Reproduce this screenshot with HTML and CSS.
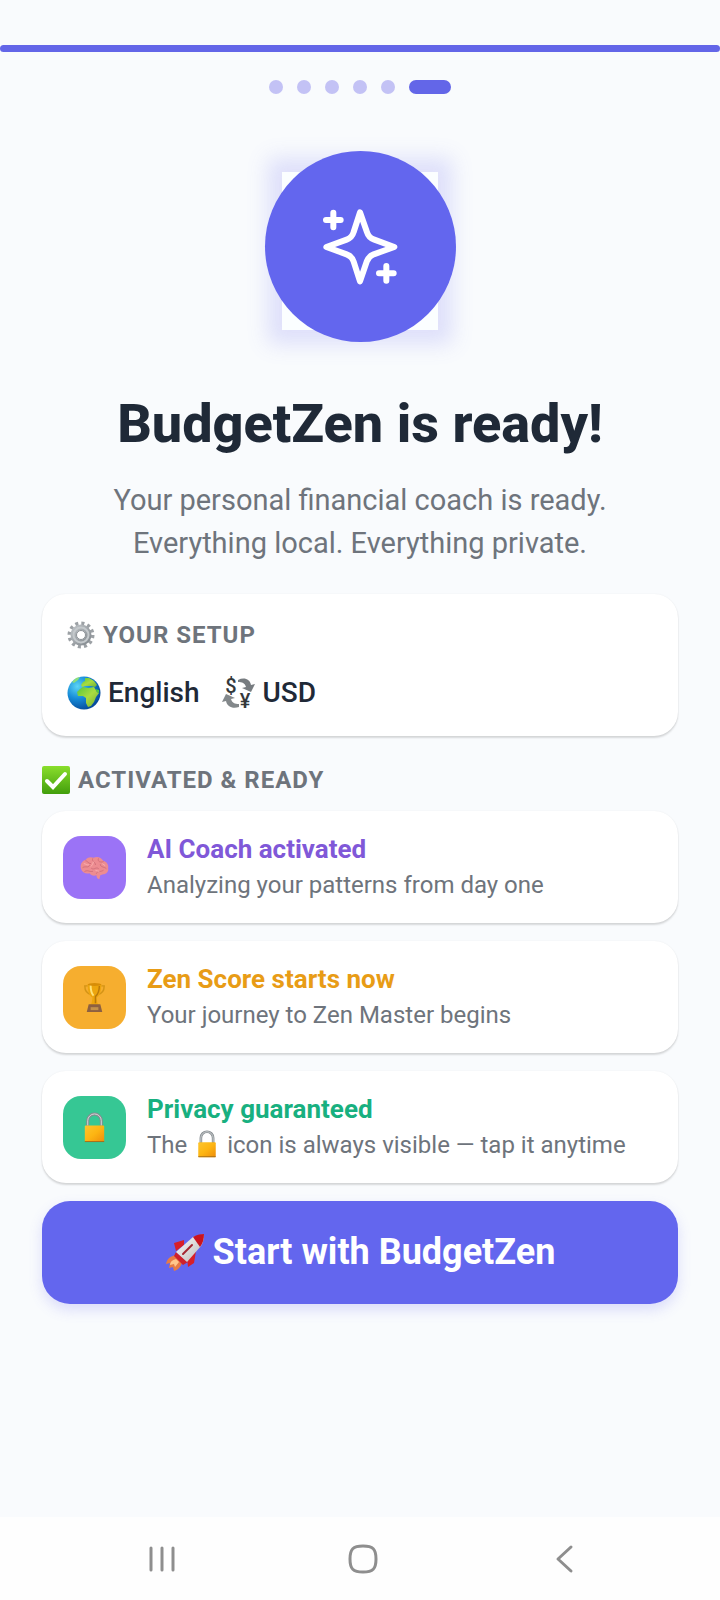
FILE: index.html
```html
<!DOCTYPE html>
<html lang="en">
<head>
<meta charset="utf-8">
<meta name="viewport" content="width=device-width, initial-scale=1">
<title>BudgetZen</title>
<link rel="stylesheet" href="styles.css">
</head>
<body>
<svg class="defs" aria-hidden="true">
  <defs>
    <linearGradient id="gold" x1="0" x2="1" y1="0" y2="1"><stop offset="0" stop-color="#fdc52e"/><stop offset=".5" stop-color="#fdb512"/><stop offset="1" stop-color="#ee8c0b"/></linearGradient>
    <linearGradient id="green" x1="0" x2="0" y1="0" y2="1"><stop offset="0" stop-color="#8ade2c"/><stop offset="1" stop-color="#429e0c"/></linearGradient>
    <radialGradient id="sea" cx=".3" cy=".3" r=".75"><stop offset="0" stop-color="#5cd5f5"/><stop offset=".5" stop-color="#168bd8"/><stop offset="1" stop-color="#064b9b"/></radialGradient>
    <linearGradient id="land" x1="0" x2="1" y1="0" y2="1"><stop offset="0" stop-color="#55c83c"/><stop offset=".5" stop-color="#a9dc40"/><stop offset="1" stop-color="#6fae35"/></linearGradient>
    <linearGradient id="steel" x1="0" x2="1" y1="0" y2="1"><stop offset="0" stop-color="#b9bec2"/><stop offset="1" stop-color="#888e93"/></linearGradient>
    <linearGradient id="hull" x1="0" x2="1" y1="0" y2="1"><stop offset="0" stop-color="#ffffff"/><stop offset="1" stop-color="#b9b6b4"/></linearGradient>
    <symbol id="lock" viewBox="0 0 22 32">
      <path d="M4 15V9a7 7 0 0 1 14 0v6" fill="none" stroke="#858b8f" stroke-width="3"/>
      <path d="M4 14V9a7 7 0 0 1 14 0v5" fill="none" stroke="#d5d9da" stroke-width="1"/>
      <rect x="1" y="14" width="20" height="17" rx="1" fill="url(#gold)"/>
      <path d="M1 30.500h20" stroke="#a06d1c"/>
    </symbol>
  </defs>
</svg>
<div class="screen">
  <header class="top">
    <div class="progress"></div>
    <div class="dots" role="img" aria-label="Step 6 of 6">
      <span class="dot"></span><span class="dot"></span><span class="dot"></span><span class="dot"></span><span class="dot"></span><span class="dot dot-active"></span>
    </div>
  </header>
  <main class="content">
    <div class="hero">
      <div class="hero-glow"></div>
      <div class="hero-circle">
        <svg class="sparkles" viewBox="241 230 240 240" fill="none" stroke="#fff" stroke-width="18" stroke-linecap="round" stroke-linejoin="round" aria-hidden="true">
          <path d="M361 246L381 303Q387 322 402 327L464 350L402 372Q387 378 381 394L361 453L342 394Q337 378 321 372L260 350L321 328Q337 322 342 305Z"/>
          <path d="M281 247v44M259 269h44M440 407v44M418 429h44"/>
        </svg>
      </div>
    </div>
    <h1 class="title">BudgetZen is ready!</h1>
    <p class="subtitle">Your personal financial coach is ready.<br>Everything local. Everything private.</p>

    <section class="card setup">
      <h2 class="label">
        <svg class="label-icon" viewBox="0 0 28 28" aria-hidden="true">
          <circle cx="14" cy="14" r="11.500" fill="none" stroke="#9ca1a5" stroke-width="4" stroke-dasharray="3 3.020"/>
          <circle cx="14" cy="14" r="7.500" fill="none" stroke="url(#steel)" stroke-width="6"/>
          <circle cx="14" cy="14" r="7.500" fill="none" stroke="#c4c9cc" stroke-width="2"/>
          <circle cx="14" cy="14" r="4.500" fill="#fff" stroke="#8b9195" stroke-width="1"/>
        </svg>
        YOUR SETUP
      </h2>
      <div class="choices">
        <span class="choice">
          <svg class="choice-icon" viewBox="0 0 34 34" aria-hidden="true">
            <circle cx="17" cy="17" r="16.500" fill="url(#sea)"/>
            <path d="M13 13l3-2 5 1 6-1 3 5 2 1-3 4-2 5-3 4-3 1-2-4 0-5-3-2-5 0-1-4z" fill="url(#land)"/>
            <path d="M14 9l2-3 2-1 0-3 4 0 5 3 3 4-2 2-4-1-3 0-3 0-3 1z" fill="url(#land)"/>
            <path d="M5 6l4-4 4-1-2 3-4 3z" fill="#8ddf7a"/>
            <path d="M28 13l4 1 0 3-2-1z" fill="#55c83c"/>
          </svg>
          English
        </span>
        <span class="choice">
          <svg class="choice-icon" viewBox="0 0 34 34" aria-hidden="true">
            <text class="glyph" x="9" y="17" text-anchor="middle">$</text>
            <text class="glyph" x="23" y="32" text-anchor="middle">¥</text>
            <path d="M16 4c6-3 12-1 13 5l4-1-4 8-9-4 4-1c-1-4-4-5-8-5z" fill="#777c80"/>
            <path d="M17 31c-6 2-12 0-13-6l-4 1 4-8 9 4-4 1c1 4 4 5 8 5z" fill="#83888b"/>
          </svg>
          USD
        </span>
      </div>
    </section>

    <section class="ready">
      <h2 class="label">
        <svg class="label-icon" viewBox="0 0 28 28" aria-hidden="true">
          <rect x="0" y="0" width="28" height="28" rx="2" fill="url(#green)"/>
          <path d="M5 15l6 6L23 8" fill="none" stroke="#fff" stroke-width="4" stroke-linecap="round"/>
        </svg>
        ACTIVATED &amp; READY
      </h2>
      <ul class="features">
        <li class="card feature">
          <div class="badge badge-violet">
            <svg class="badge-icon" viewBox="0 0 32 32" aria-hidden="true">
              <path d="M2 17c-1-4 1-8 5-9 2-3 6-3 8-2 4-2 8 0 10 3 4 1 6 5 5 8 1 3-2 6-5 6l-3 1-1 4c-2 0-3-2-3-4-3 1-6 0-7-2-4 1-8-1-9-5z" fill="#ed8c91"/>
              <path d="M4 16c3-2 5 1 7-2M7 9c2 0 2 3 5 3M14 7c-1 3 3 3 3 6M20 7c-1 3 2 4 5 3M13 17c3 2 4-2 7 0M6 20c3-2 5 1 8 0M22 13c0 3 4 2 6 4M18 22c1-3 4-1 7-3" fill="none" stroke="#d0707a" stroke-width="1" stroke-linecap="round"/>
              <path d="M5 12c2 0 3 2 5 1M15 10c-1 2-1 4-3 5M24 12l3 2M17 19l4 1" fill="none" stroke="#f9b0ad" stroke-width="1"/>
            </svg>
          </div>
          <div class="feature-text">
            <h3 class="feature-title violet">AI Coach activated</h3>
            <p class="feature-sub">Analyzing your patterns from day one</p>
          </div>
        </li>
        <li class="card feature">
          <div class="badge badge-amber">
            <svg class="badge-icon" viewBox="0 0 32 32" aria-hidden="true">
              <path d="M9 4H6c0 5 2 8 7 9M23 4h3c0 5-2 8-7 9" fill="none" stroke="#d49416" stroke-width="1.500"/>
              <path d="M9 2h14c0 8-2 13-5 14l1 6 2 2H11l2-2 1-6C11 15 9 10 9 2z" fill="#eda50d"/>
              <path d="M12 3c0 5 1 9 3 11" stroke="#ffe278" stroke-width="2" fill="none"/>
              <path d="M21 4c0 5-2 9-4 11v7" stroke="#b9790b" stroke-width="1.500" fill="none"/>
              <ellipse cx="16" cy="2.500" rx="7" ry="1.500" fill="#d78d08"/>
              <path d="M10 23h12l2 8H8z" fill="#8d6041"/>
              <rect x="12" y="26" width="8" height="3" fill="#c3914a"/>
            </svg>
          </div>
          <div class="feature-text">
            <h3 class="feature-title amber">Zen Score starts now</h3>
            <p class="feature-sub">Your journey to Zen Master begins</p>
          </div>
        </li>
        <li class="card feature">
          <div class="badge badge-green">
            <svg class="badge-icon badge-lock" aria-hidden="true"><use href="#lock"/></svg>
          </div>
          <div class="feature-text">
            <h3 class="feature-title green">Privacy guaranteed</h3>
            <p class="feature-sub">The <svg class="inline-lock" role="img" aria-label="lock"><use href="#lock"/></svg> icon is always visible — tap it anytime</p>
          </div>
        </li>
      </ul>
    </section>

    <button class="start" type="button">
      <svg class="rocket" viewBox="0 0 40 40" aria-hidden="true">
        <path d="M11 22c-6 1-9 4-10 9l4-1-1 5 4-1 1 4c4-1 7-4 8-9z" fill="#e77b45"/>
        <path d="M11 26c-4 1-6 3-6 6l4-1 1 3 4-5z" fill="#ffc68b"/>
        <path d="M19 7L9 10l2 8 8-6zM31 18l-2 12-6 4-1-9z" fill="#d81f28"/>
        <path d="M11 19l-2 4 9 9 5-3z" fill="#ce202b"/>
        <path d="M28 4L39 1c0 5-1 9-3 12L22 29 11 19z" fill="url(#hull)"/>
        <path d="M28 4C31 2 35 1 39 1c0 5-1 9-4 13z" fill="#c9131e"/>
        <path d="M27 12l-9 9" stroke="#a42631" stroke-width="2" stroke-linecap="round"/>
      </svg>
      Start with BudgetZen
    </button>
  </main>
  <nav class="navbar" aria-label="System">
    <button class="nav-btn" type="button" aria-label="Recent apps">
      <svg class="nav-icon" viewBox="0 0 32 32"><path d="M5 5v22M16 5v22M27 5v22"/></svg>
    </button>
    <button class="nav-btn" type="button" aria-label="Home">
      <svg class="nav-icon" viewBox="0 0 32 32"><path d="M16 3c10 0 13 3 13 13s-3 13-13 13S3 26 3 16 6 3 16 3z"/></svg>
    </button>
    <button class="nav-btn" type="button" aria-label="Back">
      <svg class="nav-icon" viewBox="0 0 32 32"><path d="M23 4L10 16l13 12"/></svg>
    </button>
  </nav>
</div>
</body>
</html>
```

FILE: styles.css
```css
* { box-sizing: border-box; }

body {
  margin: 0;
  background: #f9fbfd;
  font-family: Roboto, "Liberation Sans", sans-serif;
  color: #1f2937;
}

h1, h2, h3, p, ul { margin: 0; padding: 0; }

.defs { position: absolute; width: 0; height: 0; }

.screen {
  display: flex;
  flex-direction: column;
  min-height: 100vh;
}

.top { padding-top: 45px; }

.progress {
  height: 7px;
  border-radius: 4px;
  background: #6366e8;
}

.dots {
  display: flex;
  justify-content: center;
  gap: 14px;
  padding-top: 28px;
}

.dot {
  width: 14px;
  height: 14px;
  border-radius: 7px;
  background: #c3c2f5;
}

.dot-active { width: 42px; background: #6366e8; }

.content {
  flex: 1;
  display: flex;
  flex-direction: column;
  padding: 57px 42px 0;
}

.hero {
  display: grid;
  place-items: center;
}

.hero-glow, .hero-circle { grid-area: 1 / 1; }

.hero-glow {
  width: 156px;
  height: 158px;
  margin-top: 8px;
  background: #fbfeff;
  box-shadow: 0 0 20px 14px rgba(99, 102, 241, 0.18);
}

.hero-circle {
  display: grid;
  place-items: center;
  width: 191px;
  height: 191px;
  border-radius: 50%;
  background: #6366ee;
  z-index: 1;
}

.sparkles { width: 80px; height: 80px; }

.title {
  margin-top: 50px;
  font-size: 54px;
  line-height: 64px;
  font-weight: 800;
  text-align: center;
}

.subtitle {
  margin-top: 23px;
  font-size: 29px;
  line-height: 43px;
  color: #6e747c;
  text-align: center;
}

.card {
  background: #fff;
  border-radius: 24px;
  box-shadow: 0 2px 2px rgba(0, 0, 0, 0.14), 0 0 2px rgba(0, 0, 0, 0.06);
}

.setup {
  margin-top: 29px;
  padding: 25px;
}

.label {
  display: flex;
  align-items: center;
  gap: 8px;
  font-size: 24px;
  line-height: 32px;
  font-weight: 700;
  letter-spacing: 1px;
  color: #6e747c;
}

.label-icon { width: 28px; height: 28px; }

.choices {
  display: flex;
  gap: 22px;
  margin-top: 24px;
}

.choice {
  display: flex;
  align-items: center;
  gap: 7px;
  font-size: 28px;
  line-height: 36px;
  font-weight: 500;
}

.choice-icon {
  width: 34px;
  height: 34px;
  overflow: visible;
}

.glyph {
  font-size: 20px;
  font-weight: 500;
  fill: #34383b;
}

.ready { margin-top: 28px; }

.features {
  display: flex;
  flex-direction: column;
  gap: 18px;
  margin-top: 15px;
  list-style: none;
}

.feature {
  display: flex;
  align-items: center;
  gap: 21px;
  padding: 20px 21px;
}

.badge {
  display: grid;
  place-items: center;
  flex: none;
  width: 63px;
  height: 63px;
  border-radius: 18px;
}

.badge-violet { background: #9b73f6; }
.badge-amber { background: #f6ae2f; }
.badge-green { background: #36c794; }

.badge-icon { width: 31px; height: 31px; }

.feature-title {
  font-size: 26px;
  line-height: 36px;
  font-weight: 700;
}

.violet { color: #8058d8; }
.amber { color: #e89c16; }
.green { color: #18b080; }

.feature-sub {
  font-size: 24px;
  line-height: 36px;
  color: #6e747c;
}

.inline-lock {
  width: 28px;
  height: 28px;
  vertical-align: -5px;
}

.start {
  display: flex;
  align-items: center;
  justify-content: center;
  gap: 8px;
  margin-top: 18px;
  padding: 30px;
  border: 0;
  border-radius: 28px;
  background: #6366ee;
  box-shadow: 0 6px 14px rgba(99, 102, 241, 0.2);
  color: #fff;
  font-family: inherit;
  font-size: 36px;
  line-height: 43px;
  font-weight: 700;
}

.rocket { width: 40px; height: 40px; }

.navbar {
  display: flex;
  padding: 0 56px 0 62px;
  background: #fefefe;
}

.nav-btn {
  flex: 1;
  display: grid;
  place-items: center;
  height: 83px;
  padding: 0;
  border: 0;
  background: none;
}

.nav-icon {
  width: 32px;
  height: 32px;
  fill: none;
  stroke: #8e8e8e;
  stroke-width: 3;
  stroke-linecap: round;
  stroke-linejoin: round;
}
```
